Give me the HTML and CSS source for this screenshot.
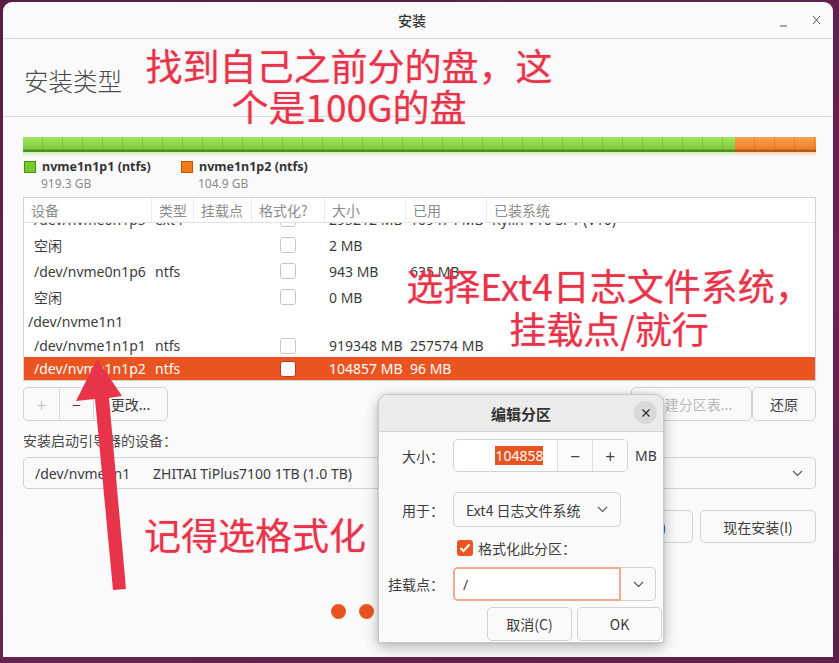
FILE: index.html
```html
<!DOCTYPE html>
<html lang="zh-CN">
<head>
<meta charset="utf-8">
<title>安装</title>
<link rel="stylesheet" href="styles.css">
</head>
<body>
<div class="window">
  <div class="titlebar">
    <div class="tb-side"></div>
    <div class="title">安装</div>
    <div class="tb-side tb-controls">
      <svg class="wm-min" width="9" height="9" viewBox="0 0 9 9"><line x1="1" y1="8" x2="8" y2="8" stroke="#555" stroke-width="1"/></svg>
      <svg class="wm-close" width="9" height="10" viewBox="0 0 9 10"><path d="M1 1 L8 9 M8 1 L1 9" stroke="#555" stroke-width="1" fill="none"/></svg>
    </div>
  </div>
  <div class="pagehead">安装类型</div>
  <div class="content">
    <div class="pbar">
      <div class="seg seg-green" style="flex:919.3"></div>
      <div class="seg seg-orange" style="flex:104.9"></div>
    </div>
    <div class="legend">
      <div class="lg-item">
        <span class="lg-sq lg-green"></span>
        <div class="lg-text"><div class="lg-name">nvme1n1p1 (ntfs)</div><div class="lg-size">919.3 GB</div></div>
      </div>
      <div class="lg-item">
        <span class="lg-sq lg-orange"></span>
        <div class="lg-text"><div class="lg-name">nvme1n1p2 (ntfs)</div><div class="lg-size">104.9 GB</div></div>
      </div>
    </div>
    <div class="ptable">
      <div class="prow thead">
        <div class="c c-dev">设备</div>
        <div class="c c-type">类型</div>
        <div class="c c-mnt">挂载点</div>
        <div class="c c-fmt">格式化?</div>
        <div class="c c-size">大小</div>
        <div class="c c-used">已用</div>
        <div class="c c-sys">已装系统</div>
      </div>
      <div class="tbody">
        <div class="rows">
          <div class="prow r26"><div class="c c-dev">/dev/nvme0n1p5</div><div class="c c-type">ext4</div><div class="c c-mnt"></div><div class="c c-fmt"><span class="cb"></span></div><div class="c c-size">295212 MB</div><div class="c c-used">109474 MB</div><div class="c c-sys">Kylin V10 SP1 (V10)</div></div>
          <div class="prow r26"><div class="c c-dev">空闲</div><div class="c c-type"></div><div class="c c-mnt"></div><div class="c c-fmt"><span class="cb"></span></div><div class="c c-size">2 MB</div><div class="c c-used"></div><div class="c c-sys"></div></div>
          <div class="prow r26"><div class="c c-dev">/dev/nvme0n1p6</div><div class="c c-type">ntfs</div><div class="c c-mnt"></div><div class="c c-fmt"><span class="cb"></span></div><div class="c c-size">943 MB</div><div class="c c-used">635 MB</div><div class="c c-sys"></div></div>
          <div class="prow r26"><div class="c c-dev">空闲</div><div class="c c-type"></div><div class="c c-mnt"></div><div class="c c-fmt"><span class="cb"></span></div><div class="c c-size">0 MB</div><div class="c c-used"></div><div class="c c-sys"></div></div>
          <div class="prow r24 parent"><div class="c c-dev">/dev/nvme1n1</div></div>
          <div class="prow r23"><div class="c c-dev">/dev/nvme1n1p1</div><div class="c c-type">ntfs</div><div class="c c-mnt"></div><div class="c c-fmt"><span class="cb"></span></div><div class="c c-size">919348 MB</div><div class="c c-used">257574 MB</div><div class="c c-sys"></div></div>
          <div class="prow r23 selected"><div class="c c-dev">/dev/nvme1n1p2</div><div class="c c-type">ntfs</div><div class="c c-mnt"></div><div class="c c-fmt"><span class="cb"></span></div><div class="c c-size">104857 MB</div><div class="c c-used">96 MB</div><div class="c c-sys"></div></div>
        </div>
      </div>
    </div>
    <div class="toolbar">
      <div class="btn-group">
        <div class="gbtn g-add disabled">+</div>
        <div class="gbtn g-del">−</div>
        <div class="gbtn g-edit">更改...</div>
      </div>
      <div class="toolbar-right">
        <div class="btn btn-newtable disabled">新建分区表...</div>
        <div class="btn btn-revert">还原</div>
      </div>
    </div>
    <div class="bootlabel">安装启动引导器的设备：</div>
    <div class="combo bootcombo">
      <span class="bc-dev">/dev/nvme1n1</span>
      <span class="bc-name">ZHITAI TiPlus7100 1TB (1.0 TB)</span>
      <svg class="chev" width="11" height="7" viewBox="0 0 11 7"><polyline points="1,1 5.5,5.5 10,1" fill="none" stroke="#555" stroke-width="1.1"/></svg>
    </div>
    <div class="actions">
      <div class="btn btn-back">后退(B)</div>
      <div class="btn btn-install">现在安装(I)</div>
    </div>
    <div class="dots">
      <span class="dot on"></span><span class="dot on"></span><span class="dot on"></span><span class="dot on"></span><span class="dot"></span><span class="dot"></span><span class="dot"></span>
    </div>
  </div>
</div>

<div class="dialog">
  <div class="dlg-head">
    <div class="dlg-title">编辑分区</div>
    <div class="dlg-close"><svg width="10" height="10" viewBox="0 0 10 10"><path d="M1.5 1.5 L8.5 8.5 M8.5 1.5 L1.5 8.5" stroke="#333" stroke-width="1.4" fill="none"/></svg></div>
  </div>
  <div class="dlg-body">
    <div class="dlg-row row-size">
      <div class="dlg-label">大小：</div>
      <div class="dlg-ctrl">
        <div class="spin">
          <div class="spin-entry"><span class="sel">104858</span></div>
          <div class="spin-btn">−</div>
          <div class="spin-btn">+</div>
        </div>
        <span class="unit">MB</span>
      </div>
    </div>
    <div class="dlg-row row-use">
      <div class="dlg-label">用于：</div>
      <div class="dlg-ctrl">
        <div class="combo usecombo">
          <span>Ext4 日志文件系统</span>
          <svg class="chev" width="11" height="7" viewBox="0 0 11 7"><polyline points="1,1 5.5,5.5 10,1" fill="none" stroke="#555" stroke-width="1.1"/></svg>
        </div>
      </div>
    </div>
    <div class="dlg-row row-fmt">
      <div class="dlg-label"></div>
      <div class="dlg-ctrl">
        <span class="cb-on"><svg width="12" height="10" viewBox="0 0 12 10"><polyline points="1.5,5 4.5,8 10.5,1.5" fill="none" stroke="#fff" stroke-width="2"/></svg></span>
        <span class="fmt-label">格式化此分区：</span>
      </div>
    </div>
    <div class="dlg-row row-mnt">
      <div class="dlg-label">挂载点：</div>
      <div class="dlg-ctrl">
        <div class="mntcombo">
          <div class="mnt-entry">/</div>
          <div class="mnt-btn"><svg width="11" height="7" viewBox="0 0 11 7"><polyline points="1,1 5.5,5.5 10,1" fill="none" stroke="#555" stroke-width="1.1"/></svg></div>
        </div>
      </div>
    </div>
    <div class="dlg-buttons">
      <div class="btn dbtn">取消(C)</div>
      <div class="btn dbtn">OK</div>
    </div>
  </div>
</div>

<div class="note note1">找到自己之前分的盘，这<br>个是100G的盘</div>
<div class="note note2">选择Ext4日志文件系统，<br>挂载点/就行</div>
<div class="note note3">记得选格式化</div>
<svg class="arrow" width="839" height="663" viewBox="0 0 839 663">
  <polygon points="97,359 76,401 95,399 113,590 126,589 109,398 122,396" fill="#e8344b"/>
</svg>
</body>
</html>
```

FILE: styles.css
```css
* { box-sizing: border-box; }
html, body { margin: 0; padding: 0; }
body {
  width: 839px;
  height: 663px;
  overflow: hidden;
  position: relative;
  background: linear-gradient(160deg, #5a1c45 0%, #6c2452 60%, #5e1f48 100%);
  font-family: "Noto Sans", "Noto Sans CJK SC", sans-serif;
  font-size: 14px;
  color: #3c3c3c;
}

.window {
  margin: 2px 0 0 3px;
  width: 830px;
  height: 655px;
  background: #fafafa;
  border-radius: 9px 9px 0 0;
  display: flex;
  flex-direction: column;
  overflow: hidden;
}

.titlebar {
  height: 37px;
  flex: none;
  border-bottom: 1px solid #d9d9d9;
  display: flex;
  align-items: center;
}
.tb-side { flex: 1 1 0; }
.title { font-size: 14px; font-weight: 500; color: #333; }
.tb-controls {
  display: flex;
  justify-content: flex-end;
  align-items: center;
  gap: 22px;
  padding-right: 12px;
}
.wm-min { margin-top: 4px; margin-right: 2px; }

.pagehead {
  height: 78px;
  flex: none;
  border-bottom: 1px solid #dcdcdc;
  display: flex;
  align-items: center;
  padding: 6px 0 0 21px;
  font-family: "Noto Sans CJK SC", sans-serif;
  font-size: 24.5px;
  font-weight: 300;
  color: #4a4a4a;
}

.content {
  flex: 1;
  display: flex;
  flex-direction: column;
  padding: 0 17px 0 20px;
}

/* partition bar */
.pbar {
  margin-top: 20px;
  height: 20px;
  display: flex;
  flex: none;
}
.seg { height: 20px; }
.seg-green {
  background:
    repeating-linear-gradient(to right, rgba(60,120,20,0) 0 19px, rgba(60,120,20,0.22) 19px 20px) 0 0 / 100% 14px no-repeat,
    linear-gradient(to bottom, #a2e462 0, #8fd94c 6px, #7fcb3c 12px, #4f8f22 13px, #4f8f22 15px, rgba(130,205,70,0.35) 15px, rgba(250,250,250,0) 20px);
}
.seg-orange {
  background:
    repeating-linear-gradient(to right, rgba(150,70,10,0) 0 19px, rgba(150,70,10,0.22) 19px 20px) 0 0 / 100% 14px no-repeat,
    linear-gradient(to bottom, #f9a24a 0, #f3903a 6px, #ec8230 12px, #b85a14 13px, #b85a14 15px, rgba(240,140,60,0.35) 15px, rgba(250,250,250,0) 20px);
}

/* legend */
.legend {
  display: flex;
  margin-top: 1px;
  flex: none;
}
.lg-item {
  width: 157px;
  display: flex;
  align-items: flex-start;
}
.lg-sq {
  width: 12px;
  height: 12px;
  margin: 3px 6px 0 1px;
  flex: none;
}
.lg-green { background: #79cd2b; border: 1px solid #4e8e1c; }
.lg-orange { background: #f27b13; border: 1px solid #b65808; }
.lg-name { font-weight: 700; font-size: 12.5px; line-height: 17px; color: #333; }
.lg-size { font-size: 12px; line-height: 17px; color: #8a8a8a; margin-left: -1px; }

/* table */
.ptable {
  margin-top: 5px;
  border: 1px solid #d2d2d2;
  background: #fff;
  flex: none;
}
.prow {
  display: grid;
  grid-template-columns: 127px 42px 58px 73px 81px 81px 1fr;
  align-items: center;
  white-space: nowrap;
}
.thead {
  height: 25px;
  border-bottom: 1px solid #e2e2e2;
  color: #8c8c8c;
  font-family: "Noto Sans CJK SC", sans-serif;
  background: #fff;
  position: relative;
  z-index: 1;
}
.thead .c { padding-left: 7px; height: 24px; line-height: 24px; border-left: 1px solid #ececec; }
.thead .c:first-child { border-left: none; }
.tbody { height: 157px; overflow: hidden; }
.rows { margin-top: -17px; }
.r26 { height: 26px; }
.r24 { height: 24px; }
.r23 { height: 23px; }
.prow .c { overflow: hidden; }
.rows .c-dev { padding-left: 10px; }
.rows .parent { display: block; padding-left: 4px; line-height: 24px; }
.rows .parent .c-dev { padding-left: 0; }
.rows .c-type { padding-left: 4px; }
.rows .c-fmt { padding-left: 29px; display: flex; }
.rows .c-size { padding-left: 5px; }
.rows .c-used { padding-left: 5px; }
.rows .c-sys { padding-left: 6px; }
.cb {
  width: 16px;
  height: 16px;
  border: 1px solid #c6c6c6;
  border-radius: 3px;
  background: #fff;
  display: inline-block;
}
.selected { background: #e95420; color: #fff; }
.selected .cb { border-color: #b8401a; }

/* toolbar */
.toolbar {
  margin-top: 6px;
  height: 34px;
  display: flex;
  justify-content: space-between;
  flex: none;
}
.btn-group {
  display: flex;
  border: 1px solid #d2d2d2;
  border-radius: 5px;
  background: #f9f9f9;
  overflow: hidden;
}
.gbtn {
  display: flex;
  align-items: center;
  justify-content: center;
  border-left: 1px solid #d8d8d8;
  font-family: "Noto Sans CJK SC", sans-serif;
}
.gbtn:first-child { border-left: none; }
.g-add { width: 35px; font-size: 18px; font-weight: 300; }
.g-del { width: 34px; font-size: 15px; }
.g-edit { width: 74px; }
.disabled { color: #b9b9b9; }
.toolbar-right { display: flex; }
.btn {
  display: flex;
  align-items: center;
  justify-content: center;
  border: 1px solid #d2d2d2;
  border-radius: 5px;
  background: #f9f9f9;
  font-family: "Noto Sans CJK SC", sans-serif;
  color: #3c3c3c;
}
.btn.disabled { color: #b9b9b9; }
.btn-newtable { width: 121px; }
.btn-revert { width: 64px; }

.bootlabel {
  margin-top: 9px;
  line-height: 20px;
  font-family: "Noto Sans CJK SC", sans-serif;
  color: #4a4a4a;
  flex: none;
}
.combo {
  display: flex;
  align-items: center;
  border: 1px solid #d2d2d2;
  border-radius: 5px;
  background: #f9f9f9;
}
.bootcombo {
  margin-top: 7px;
  height: 32px;
  padding: 0 12px 0 11px;
  flex: none;
}
.bc-dev { width: 118px; }
.bc-name { flex: 1; }

.actions {
  margin-top: 21px;
  height: 33px;
  display: flex;
  justify-content: flex-end;
  gap: 7px;
  flex: none;
}
.btn-back { width: 100px; }
.btn-install { width: 116px; }

.dots {
  margin-top: 61px;
  display: flex;
  justify-content: center;
  gap: 13px;
  padding-left: 6px;
}
.dot { width: 15px; height: 15px; border-radius: 50%; background: #d0d0d0; }
.dot.on { background: #e95420; }

/* dialog */
.dialog {
  position: absolute;
  left: 378px;
  top: 394px;
  width: 286px;
  height: 249px;
  background: #fafafa;
  border: 1px solid #c9c9c9;
  border-radius: 10px 10px 2px 2px;
  box-shadow: 0 4px 14px rgba(0,0,0,0.28), 0 0 3px rgba(0,0,0,0.12);
  overflow: hidden;
  font-family: "Noto Sans CJK SC", sans-serif;
}
.dlg-head {
  height: 37px;
  background: #ebebeb;
  border-bottom: 1px solid #d3d3d3;
  display: flex;
  align-items: center;
  justify-content: center;
  position: relative;
}
.dlg-title { font-weight: 700; font-size: 15px; color: #333; }
.dlg-close {
  position: absolute;
  right: 6px;
  top: 6px;
  width: 23px;
  height: 23px;
  border-radius: 50%;
  background: #d9d9d9;
  display: flex;
  align-items: center;
  justify-content: center;
}
.dlg-body { display: flex; flex-direction: column; }
.dlg-row {
  display: grid;
  grid-template-columns: 65px 1fr;
  column-gap: 9px;
  align-items: center;
}
.dlg-label { text-align: right; color: #3c3c3c; }
.dlg-ctrl { display: flex; align-items: center; }
.row-size { margin-top: 7px; height: 33px; }
.spin {
  width: 175px;
  height: 33px;
  display: flex;
  border: 1px solid #d2d2d2;
  border-radius: 5px;
  background: #fff;
  overflow: hidden;
}
.spin-entry {
  width: 104px;
  display: flex;
  align-items: center;
  justify-content: flex-end;
  padding-right: 14px;
  font-family: "Noto Sans", sans-serif;
}
.sel { background: #e95420; color: #fff; line-height: 19px; }
.spin-btn {
  width: 35px;
  display: flex;
  align-items: center;
  justify-content: center;
  border-left: 1px solid #e0e0e0;
  background: #fbfbfb;
  font-size: 17px;
  color: #444;
}
.unit { margin-left: 7px; font-family: "Noto Sans", sans-serif; }
.row-use { margin-top: 20px; height: 35px; }
.usecombo {
  width: 168px;
  height: 35px;
  padding: 0 12px 0 12px;
  justify-content: space-between;
  background: #fafafa;
}
.row-fmt { margin-top: 11px; height: 20px; }
.cb-on {
  width: 16px;
  height: 16px;
  margin-left: 4px;
  border-radius: 3px;
  background: #e95420;
  display: flex;
  align-items: center;
  justify-content: center;
}
.fmt-label { margin-left: 5px; }
.row-mnt { margin-top: 9px; height: 34px; }
.mntcombo { display: flex; height: 34px; }
.mnt-entry {
  width: 168px;
  border: 2px solid #f2ab91;
  border-radius: 5px 0 0 5px;
  background: #fff;
  display: flex;
  align-items: center;
  padding-left: 8px;
  font-family: "Noto Sans", sans-serif;
}
.mnt-btn {
  width: 35px;
  border: 1px solid #d2d2d2;
  border-left: none;
  border-radius: 0 5px 5px 0;
  background: #fafafa;
  display: flex;
  align-items: center;
  justify-content: center;
}
.dlg-buttons {
  margin-top: 6px;
  display: flex;
  justify-content: flex-end;
  gap: 5px;
  padding-right: 1px;
}
.dbtn { width: 85px; height: 34px; background: #fafafa; }

/* annotations */
.note {
  position: absolute;
  font-family: "Noto Sans CJK SC", sans-serif;
  font-size: 37px;
  color: #e8344b;
  text-align: center;
  white-space: nowrap;
  text-shadow: 0 0 1.5px rgba(232,52,75,0.45);
}
.note1 { left: 129px; top: 45px; width: 440px; line-height: 41px; }
.note2 { left: 389px; top: 264px; width: 440px; line-height: 43px; }
.note3 { left: 144px; top: 513px; line-height: 42px; text-align: left; }
.arrow { position: absolute; left: 0; top: 0; pointer-events: none; }
```
